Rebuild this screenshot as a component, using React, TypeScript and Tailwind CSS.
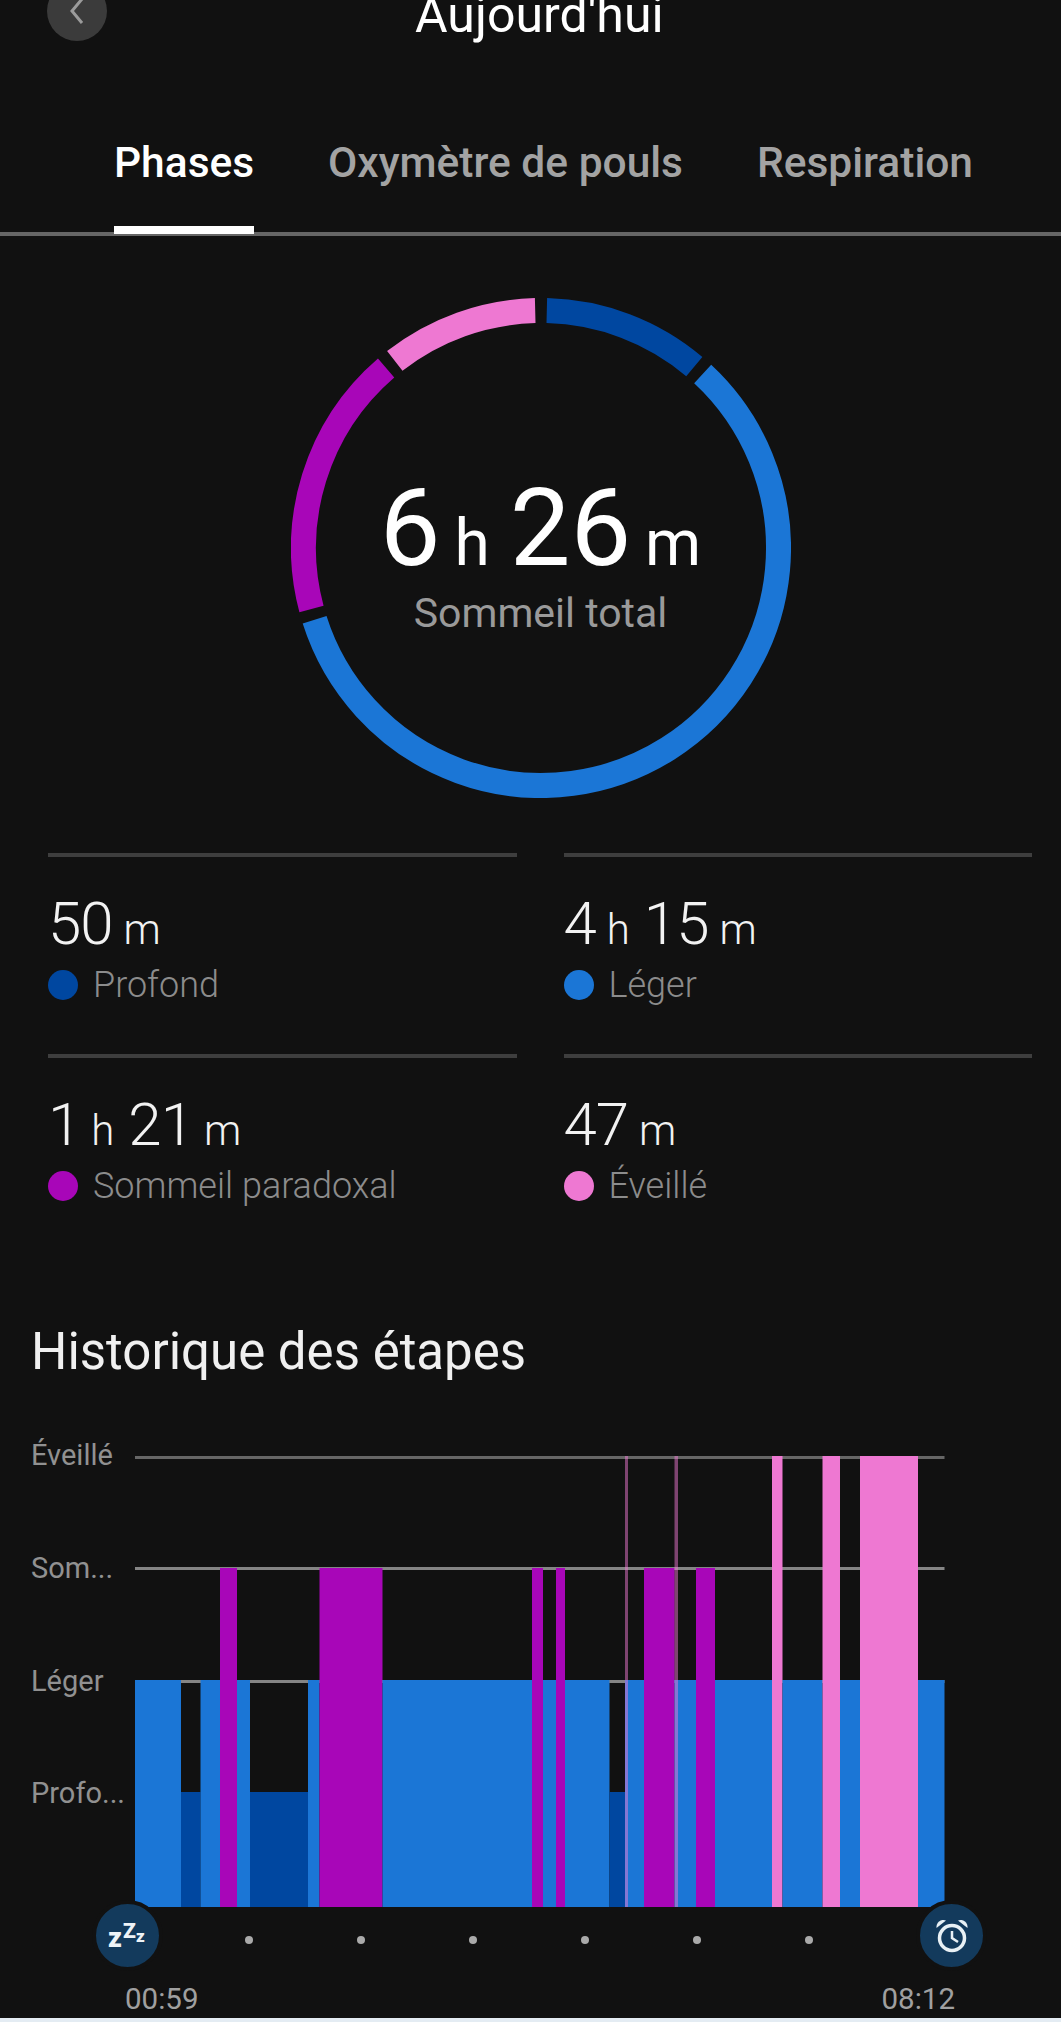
const DEEP = "#0047a0";
const LIGHT = "#1b76d6";
const PARA = "#a806b8";
const AWAKE = "#ee78d2";

const CX = 250;
const CY = 250;
const R = 237.5;

function arc(from: number, to: number) {
  const pt = (deg: number) => {
    const a = ((deg - 90) * Math.PI) / 180;
    return `${CX + R * Math.cos(a)} ${CY + R * Math.sin(a)}`;
  };
  const large = to - from > 180 ? 1 : 0;
  return `M ${pt(from)} A ${R} ${R} 0 ${large} 1 ${pt(to)}`;
}

const ringParts = [
  { from: 1.4, to: 40.2, color: DEEP },
  { from: 42.9, to: 252.4, color: LIGHT },
  { from: 255.1, to: 319.3, color: PARA },
  { from: 322, to: 358.6, color: AWAKE },
];

// bars in page pixels: start, end, stage
const bars: [number, number, string][] = [
  [135, 181, "light"],
  [181, 200.5, "deep"],
  [200.5, 220, "light"],
  [220, 237, "para"],
  [237, 250, "light"],
  [250, 308, "deep"],
  [308, 319.5, "light"],
  [319.5, 382.5, "para"],
  [382.5, 532, "light"],
  [532, 543, "para"],
  [543, 556, "light"],
  [556, 565, "para"],
  [565, 609.5, "light"],
  [609.5, 625, "deep"],
  [625, 628, "thin"],
  [628, 644, "light"],
  [644, 674.5, "para"],
  [674.5, 678, "thin"],
  [678, 696, "light"],
  [696, 715, "para"],
  [715, 772, "light"],
  [772, 782.5, "awake"],
  [782.5, 822.5, "light"],
  [822.5, 840, "awake"],
  [840, 860, "light"],
  [860, 918, "awake"],
  [918, 944.5, "light"],
];

const stageStyle: Record<string, { top: number; fill: string; opacity?: number }> = {
  awake: { top: 0, fill: AWAKE },
  thin: { top: 0, fill: AWAKE, opacity: 0.5 },
  para: { top: 112, fill: PARA },
  light: { top: 224, fill: LIGHT },
  deep: { top: 336, fill: DEEP },
};

const BOTTOM = 451;

function Ring() {
  return (
    <svg width="500" height="500" viewBox="0 0 500 500" className="[grid-area:1/1]">
      {ringParts.map((p) => (
        <path key={p.from} d={arc(p.from, p.to)} fill="none" stroke={p.color} strokeWidth="25" />
      ))}
    </svg>
  );
}

function Chart() {
  // viewBox x origin is the page's x = 135, y origin the Éveillé line
  return (
    <svg width="811" height={BOTTOM} viewBox={`135 0 811 ${BOTTOM}`} className="block shrink-0">
      <rect x="135" y="0" width="809.5" height="3" fill="#666666" />
      <rect x="135" y="111" width="809.5" height="3" fill="#858585" />
      <rect x="135" y="224" width="809.5" height="3" fill="#858585" />
      {bars.map(([a, b, stage]) => {
        const s = stageStyle[stage];
        return (
          <g key={a}>
            {stage === "thin" && <rect x={a} y="224" width={b - a} height={BOTTOM - 224} fill={LIGHT} />}
            <rect x={a} y={s.top} width={b - a} height={BOTTOM - s.top} fill={s.fill} opacity={s.opacity} />
          </g>
        );
      })}
    </svg>
  );
}

function Stat({ parts, color, label }: { parts: [string, string][]; color: string; label: string }) {
  return (
    <div className="border-t-[4px] border-[#3e3e3e] h-[201px]">
      <div className="flex items-baseline pt-[32px] h-[92px] text-[#f2f2f2] font-light">
        {parts.map(([n, u]) => (
          <span key={u} className="mr-[14px]">
            <span className="text-[60px] leading-[70px] tracking-[-1px]">{n}</span>
            <span className="text-[42px] leading-[70px] ml-[11px]">{u}</span>
          </span>
        ))}
      </div>
      <div className="flex items-center h-[40px] mt-[16px] text-[36px] leading-[40px] text-[#8c8c8c] font-light">
        <span className="w-[30px] h-[30px] rounded-full mr-[15px]" style={{ backgroundColor: color }} />
        {label}
      </div>
    </div>
  );
}

function Badge({ children }: { children: React.ReactNode }) {
  return (
    <div className="w-[71px] h-[71px] shrink-0 rounded-full bg-[#133a5c] border-[4px] border-[#111111] flex items-center justify-center">
      {children}
    </div>
  );
}

function Dot({ className }: { className: string }) {
  return <span className={`w-2 h-2 rounded-full bg-[#aaaaaa] mt-[10px] ${className}`} />;
}

export default function App() {
  return (
    <div
      className="w-[1061px] h-[2022px] overflow-hidden bg-[#111111] flex flex-col"
      style={{ fontFamily: "Roboto, 'Noto Sans', sans-serif" }}
    >
      <div className="flex-1">
        {/* top bar, cut by the screenshot */}
        <div className="flex items-end h-[42px] -mt-[1px] pl-[47px]">
          <div className="w-[60px] h-[60px] rounded-full bg-[#3b3b3b] flex items-center justify-center shrink-0 -mt-[19px]">
            <svg width="20" height="28" viewBox="0 0 20 28" fill="none" stroke="#9b9b9b" strokeWidth="3">
              <path d="M15 2 L5 14 L15 26" />
            </svg>
          </div>
          <div className="ml-[308px] text-[50px] leading-[52px] text-white whitespace-nowrap">Aujourd'hui</div>
        </div>

        {/* tabs */}
        <div className="h-[195px] border-b-[4px] border-[#666666] pl-[114px] flex text-[42.5px] font-medium text-[#a3a3a3]">
          <div className="h-[193px] pt-[97px] border-b-[8px] border-white text-white leading-[50px] w-[140px] text-center">Phases</div>
          <div className="ml-[74px] pt-[97px] leading-[50px]">Oxymètre de pouls</div>
          <div className="ml-[74px] pt-[97px] leading-[50px]">Respiration</div>
        </div>

        {/* total sleep ring */}
        <div className="mt-[61.5px] ml-[290.5px] grid w-[500px] h-[500px]">
          <Ring />
          <div className="[grid-area:1/1] flex flex-col items-center pt-[175px]">
            <div className="flex items-baseline text-white font-normal">
              <span className="text-[108px] leading-[110px]">6</span>
              <span className="text-[64px] leading-[110px] ml-[14px]">h</span>
              <span className="text-[108px] leading-[110px] ml-[20px]">26</span>
              <span className="text-[64px] leading-[110px] ml-[14px]">m</span>
            </div>
            <div className="text-[41px] leading-[50px] text-[#9a9a9a] font-normal -mt-[11px]">Sommeil total</div>
          </div>
        </div>

        {/* phase durations */}
        <div className="grid grid-cols-2 gap-x-[47px] pl-[48px] pr-[29px] mt-[55px]">
          <Stat parts={[["50", "m"]]} color={DEEP} label="Profond" />
          <Stat parts={[["4", "h"], ["15", "m"]]} color={LIGHT} label="Léger" />
          <Stat parts={[["1", "h"], ["21", "m"]]} color={PARA} label="Sommeil paradoxal" />
          <Stat parts={[["47", "m"]]} color={AWAKE} label="Éveillé" />
        </div>

        {/* stage history */}
        <h2 className="ml-[31px] mt-[69px] text-[51px] leading-[56px] text-[#f0f0f0] font-normal">Historique des étapes</h2>

        <div className="flex mt-[76.5px] ml-[31px]">
          <div className="w-[104px] shrink-0 text-[29px] leading-[36px] text-[#919191] -mt-[19px]">
            <div className="h-[113px]">Éveillé</div>
            <div className="h-[113px]">Som...</div>
            <div className="h-[112px]">Léger</div>
            <div>Profo...</div>
          </div>
          <Chart />
        </div>

        <div className="flex items-center -mt-[7.5px] pl-[92px]">
          <Badge>
            <svg width="46" height="34" viewBox="0 0 46 34">
              <g fill="#eef3f7" fontFamily="Roboto, sans-serif" fontWeight="900">
                <text x="3" y="29" fontSize="27">z</text>
                <text x="18" y="20" fontSize="21">Z</text>
                <text x="31" y="24" fontSize="17">z</text>
              </g>
            </svg>
          </Badge>
          <Dot className="ml-[82px]" />
          <Dot className="ml-[104px]" />
          <Dot className="ml-[104px]" />
          <Dot className="ml-[104px]" />
          <Dot className="ml-[104px]" />
          <Dot className="ml-[104px]" />
          <div className="ml-[103px]">
            <Badge>
              <svg width="40" height="40" viewBox="0 0 40 40" fill="none">
                <circle cx="20" cy="23" r="12.5" stroke="#e8f0f5" strokeWidth="3.5" />
                <path d="M20 16 V23 L26 27" stroke="#e8f0f5" strokeWidth="2.5" />
                <path d="M4.5 13 A7 7 0 0 1 14 5.5 Z" fill="#e8f0f5" />
                <path d="M35.5 13 A7 7 0 0 0 26 5.5 Z" fill="#e8f0f5" />
              </svg>
            </Badge>
          </div>
        </div>

        <div className="flex justify-between pl-[125px] pr-[106px] mt-[11.5px] text-[29.5px] leading-[34px] font-normal text-[#a0a0a0]">
          <span>00:59</span>
          <span>08:12</span>
        </div>
      </div>
      <div className="h-[4px] bg-[#e4ecf3]" />
    </div>
  );
}
